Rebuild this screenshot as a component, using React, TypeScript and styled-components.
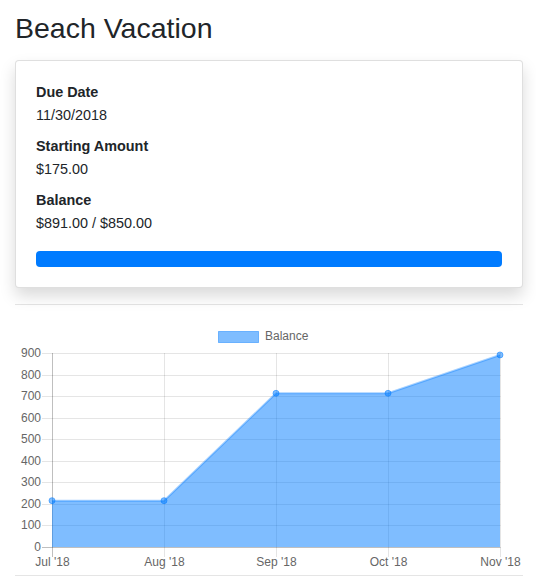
import React from "react";
import styled, { createGlobalStyle } from "styled-components";

const GlobalStyle = createGlobalStyle`
  html, body { margin: 0; padding: 0; background: #fff; }
  body {
    font-family: "Liberation Sans", Helvetica, Arial, sans-serif;
    color: #212529;
    -webkit-font-smoothing: antialiased;
  }
`;

const Page = styled.div`
  padding: 11px 13px 0 15px;
`;

const Title = styled.h1`
  margin: 0 0 15px;
  font-size: 28.5px;
  line-height: 34px;
  font-weight: 400;
  color: #212529;
`;

const Card = styled.div`
  background: #fff;
  border: 1px solid rgba(0, 0, 0, 0.125);
  border-radius: 4px;
  box-shadow: 0 8px 16px rgba(0, 0, 0, 0.15);
`;

const CardBody = styled.div`
  padding: 21px 20px 20px;
  display: flex;
  flex-direction: column;
`;

const Field = styled.div`
  display: flex;
  flex-direction: column;
  gap: 2px;
  & + & {
    margin-top: 10px;
  }
`;

const Label = styled.div`
  font-size: 14.4px;
  line-height: 21px;
  font-weight: 700;
`;

const Value = styled.div`
  font-size: 14.4px;
  line-height: 21px;
`;

const Progress = styled.div`
  margin-top: 17px;
  height: 16px;
  border-radius: 4px;
  background: #e9ecef;
  overflow: hidden;
  display: flex;
`;

const ProgressBar = styled.div`
  background: #007bff;
  height: 100%;
`;

const Divider = styled.hr<{ $top: number }>`
  margin: ${(p) => p.$top}px 0 0;
  border: 0;
  border-top: 1px solid rgba(0, 0, 0, 0.1);
  height: 0;
`;

const ChartWrap = styled.div`
  height: 270px;
  & svg {
    display: block;
    font-family: "Liberation Sans", Helvetica, Arial, sans-serif;
  }
`;

const months = ["Jul '18", "Aug '18", "Sep '18", "Oct '18", "Nov '18"];
const values = [215, 215, 713, 713, 891];

const LEFT = 37;
const RIGHT = 485;
const TOP = 48;
const BOTTOM = 242;
const MAX = 900;

const xAt = (i: number) => LEFT + (i * (RIGHT - LEFT)) / (months.length - 1);
const yAt = (v: number) => BOTTOM - (v * (BOTTOM - TOP)) / MAX;

const BalanceChart: React.FC = () => {
  const ticks = [0, 100, 200, 300, 400, 500, 600, 700, 800, 900];
  const pts = values.map((v, i) => [xAt(i), yAt(v)] as const);
  const linePath = pts.map(([x, y], i) => `${i ? "L" : "M"}${x},${y}`).join(" ");
  const areaPath = `${linePath} L${RIGHT},${BOTTOM} L${LEFT},${BOTTOM} Z`;
  return (
    <svg width="508" height="270" viewBox="0 0 508 270">
      <rect x={203.5} y={26.5} width={40} height={11} fill="rgba(0,123,255,0.5)" stroke="rgba(0,123,255,0.45)" strokeWidth={1} />
      <text x={250} y={35} fontSize={12} fill="#666">Balance</text>

      {ticks.map((t) => {
        const y = Math.round(yAt(t)) + 0.5;
        return (
          <g key={t}>
            <line x1={27} x2={RIGHT + 0.5} y1={y} y2={y} stroke={t === 0 ? "rgba(0,0,0,0.25)" : "rgba(0,0,0,0.1)"} strokeWidth={1} />
            <text x={26} y={Math.round(yAt(t)) + 4} fontSize={12} fill="#666" textAnchor="end">{t}</text>
          </g>
        );
      })}

      {months.map((m, i) => {
        const x = Math.round(xAt(i)) + 0.5;
        return (
          <g key={m}>
            <line x1={x} x2={x} y1={TOP} y2={BOTTOM + 10} stroke={i === 0 ? "rgba(0,0,0,0.25)" : "rgba(0,0,0,0.1)"} strokeWidth={1} />
            <text x={x} y={261} fontSize={12} fill="#666" textAnchor="middle">{m}</text>
          </g>
        );
      })}

      <path d={areaPath} fill="rgba(0,123,255,0.5)" />
      <path d={linePath} fill="none" stroke="rgba(0,123,255,0.35)" strokeWidth={2} strokeLinejoin="round" />
      {pts.map(([x, y], i) => (
        <circle key={i} cx={x} cy={y} r={3} fill="rgba(0,123,255,0.5)" stroke="rgba(0,123,255,0.5)" strokeWidth={1} />
      ))}
    </svg>
  );
};

export default function App() {
  return (
    <>
      <GlobalStyle />
      <Page>
        <Title>Beach Vacation</Title>
        <Card>
          <CardBody>
            <Field>
              <Label>Due Date</Label>
              <Value>11/30/2018</Value>
            </Field>
            <Field>
              <Label>Starting Amount</Label>
              <Value>$175.00</Value>
            </Field>
            <Field>
              <Label>Balance</Label>
              <Value>$891.00 / $850.00</Value>
            </Field>
            <Progress>
              <ProgressBar style={{ width: `${Math.min(100, (891 / 850) * 100)}%` }} />
            </Progress>
          </CardBody>
        </Card>
        <Divider $top={16} />
        <ChartWrap>
          <BalanceChart />
        </ChartWrap>
        <Divider $top={0} />
      </Page>
    </>
  );
}
